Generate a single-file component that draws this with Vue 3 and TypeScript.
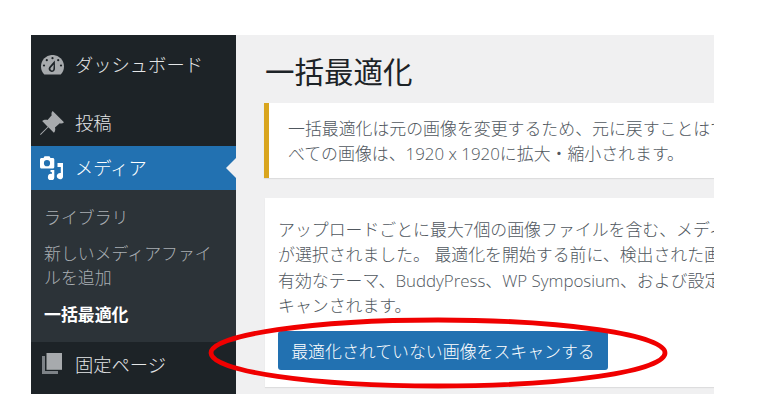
<script setup lang="ts">
const subItems = [
  { label: 'ライブラリ', current: false },
  { label: '新しいメディアファイルを追加', current: false },
  { label: '一括最適化', current: true },
]
const noticeLines = [
  '一括最適化は元の画像を変更するため、元に戻すことはできません。す',
  'べての画像は、1920 x 1920に拡大・縮小されます。',
]
const cardLines = [
  'アップロードごとに最大7個の画像ファイルを含む、メディアライブラリ',
  'が選択されました。 最適化を開始する前に、検出された画像を確認し',
  '有効なテーマ、BuddyPress、WP Symposium、および設定されたフォルダがス',
  'キャンされます。',
]
</script>

<template>
  <div class="page">
    <div class="window">
      <nav class="sidebar">
        <a class="item first">
          <svg class="icon gauge" viewBox="0 0 23 20">
            <path d="M3.300 19.500A11.500 11.500 0 1 1 19.700 19.500Z" />
            <g class="cut">
              <circle cx="11.500" cy="3.200" r="1.100" />
              <circle cx="5.800" cy="5.200" r="1.100" />
              <circle cx="17.200" cy="5.200" r="1.100" />
              <circle cx="3" cy="10.500" r="1.100" />
              <circle cx="20" cy="10.500" r="1.100" />
              <path d="M13.800 5.500 14 13.500a3.200 3.200 0 1 1-5.800-1.600z" />
            </g>
            <path d="M12.700 9.500 12.400 14a1.500 1.500 0 1 1-2.600-1.200z" />
          </svg>
          <span>ダッシュボード</span>
        </a>
        <a class="item posts">
          <svg class="icon pin" viewBox="1 1.200 17.800 17.800"><path d="M10.400 1.200 18.800 9.600c-.9.900-2.100 1.100-3.100.7l-3.600 3.100c.5 1.400.2 2.900-.8 4L7.200 13.300 1.500 19l-.5-.5L6.700 12.800 2.600 8.700c1.100-1 2.600-1.300 4-.8l3.100-3.600c-.4-1-.2-2.200.7-3.100z"/></svg>
          <span>投稿</span>
        </a>
        <a class="item active">
          <svg class="icon media" viewBox="0 0 23 24">
            <path fill-rule="evenodd" d="M1.500 2H3.500L4.500 .3H9.500L10.500 2H12.800C13.600 2 14.300 2.700 14.300 3.500V11C14.300 11.800 13.600 12.500 12.800 12.500H1.500C.7 12.500 0 11.800 0 11V3.500C0 2.700.7 2 1.500 2ZM7 10.300A3.100 3.100 0 1 0 7 4.100 3.100 3.100 0 0 0 7 10.300Z" />
            <path d="M17.500 7H23.200V20A3.200 3.200 0 1 1 20.800 17V11H17.500Z" />
            <path d="M10.500 14H14.300V21A3.200 3.200 0 1 1 11.800 18V16H10.500Z" />
          </svg>
          <span>メディア</span>
          <i class="arrow"></i>
        </a>
        <ul class="submenu">
          <li v-for="s in subItems" :key="s.label" :class="{ current: s.current }">{{ s.label }}</li>
        </ul>
        <a class="item pages">
          <svg class="icon sheet" viewBox="0 0 20 21"><path d="M4.500 0H20V16.800H4.500z"/><path class="back" d="M0 3H3V18H16V21H0z"/></svg>
          <span>固定ページ</span>
        </a>
      </nav>

      <main class="content">
        <h1 class="title">一括最適化</h1>
        <div class="notice">
          <p v-for="l in noticeLines" :key="l">{{ l }}</p>
        </div>
        <div class="card">
          <p v-for="l in cardLines" :key="l">{{ l }}</p>
          <button class="scan">最適化されていない画像をスキャンする</button>
        </div>
      </main>
    </div>

    <svg class="ring" viewBox="0 0 470 80" width="470" height="80">
      <ellipse cx="232" cy="39" rx="227" ry="33" fill="none" stroke="#f00000" stroke-width="4.800" />
    </svg>
  </div>
</template>

<style>
html, body { margin: 0; background: #fff; }
</style>

<style scoped>
.page {
  position: relative;
  width: 766px;
  height: 415px;
  box-sizing: border-box;
  padding: 35px 0 0 31px;
  overflow: hidden;
  font-family: "Open Sans", "Noto Sans CJK JP", sans-serif;
  font-size: 16.900px;
  font-weight: 300;
}
.window {
  display: flex;
  width: 683px;
  height: 359px;
  overflow: hidden;
  background: #f0f0f1;
}
.sidebar {
  flex: 0 0 205px;
  display: flex;
  flex-direction: column;
  background: #1d2327;
  color: #e4e6e7;
}
.item {
  position: relative;
  display: flex;
  align-items: center;
  padding-left: 9px;
  height: 42px;
  box-sizing: border-box;
  font-size: 18.300px;
  line-height: 24px;
}
.item.first { height: 69px; padding-bottom: 9px; padding-left: 10px; }
.item.posts { padding-bottom: 4px; }
.item.active { height: 44px; background: #2271b1; color: #fff; }
.item.pages { height: 52px; padding-bottom: 10px; padding-left: 11px; }
.item.pages span { margin-top: 4px; }
.icon {
  flex: none;
  fill: #a7aaad;
}
.gauge { width: 23px; height: 20px; margin-right: 11px; }
.gauge .cut { fill: #1d2327; }
.pin { width: 24px; height: 24px; margin-right: 11px; }
.media { width: 23px; height: 24px; margin-right: 12px; fill: #fff; }
.sheet { width: 20px; height: 21px; margin-right: 13px; }
.sheet .back { fill: #7d8287; }
.arrow {
  position: absolute;
  right: 0;
  top: 12px;
  border: 10px solid transparent;
  border-right-color: #f0f0f1;
  border-left-width: 0;
}
.submenu {
  list-style: none;
  margin: 0;
  padding: 15px 12px 15px 13px;
  background: #2c3338;
  color: #a9aeb3;
  line-height: 25px;
}
.submenu li { padding: 0 0 12px; }
.submenu li:nth-child(2) { line-height: 24px; padding-bottom: 12px; }
.submenu li:last-child { padding-bottom: 0; }
.submenu li.current { color: #fff; font-weight: 700; }
.content {
  flex: 1;
  min-width: 0;
  padding: 0 0 0 29px;
  color: #50575e;
  overflow: hidden;
}
.title {
  margin: 15px 0 0;
  font-size: 29.500px;
  line-height: 44px;
  font-weight: 400;
  color: #1d2327;
  white-space: nowrap;
}
.notice {
  margin: 9px 0 0 -1px;
  height: 75px;
  box-sizing: border-box;
  padding: 14px 0 0 19px;
  border-left: 5px solid #d9a51e;
  background: #fff;
  box-shadow: 0 1px 1px rgba(0, 0, 0, .08);
  line-height: 24.600px;
  white-space: nowrap;
  overflow: hidden;
}
.notice p, .card p { margin: 0; }
.card {
  margin-top: 20px;
  height: 189px;
  box-sizing: border-box;
  padding: 19px 0 0 13px;
  background: #fff;
  box-shadow: 0 1px 1px rgba(0, 0, 0, .08);
  line-height: 25.300px;
  white-space: nowrap;
  overflow: hidden;
}
.scan {
  display: block;
  margin-top: 13px;
  width: 330px;
  height: 39px;
  padding: 2px 0 0;
  border: 0;
  border-radius: 3px;
  background: #2271b1;
  color: #fff;
  font: inherit;
  line-height: 36px;
}
.ring {
  position: absolute;
  left: 206px;
  top: 314px;
}
</style>
